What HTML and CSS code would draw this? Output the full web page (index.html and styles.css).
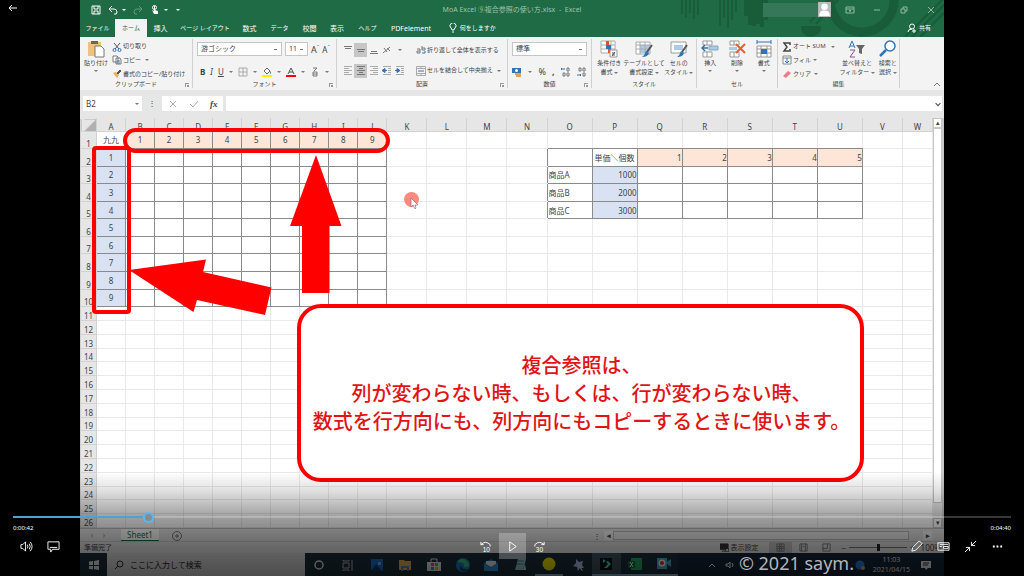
FILE: index.html
```html
<!DOCTYPE html>
<html lang="ja">
<head>
<meta charset="utf-8">
<title>MoA Excel 複合参照の使い方</title>
<link rel="stylesheet" href="styles.css">
</head>
<body>
<main class="player">
<div class="frame">
  <div class="top">
  <svg class="deco" viewBox="0 0 264 37" aria-hidden="true">
    <g stroke="#185c39" stroke-width="2" fill="none">
      <path d="M2 0v14M6 0v18M10 0v13M14 0v19M18 0v15M40 0v26M44 0v18M48 0v28M52 0v20M56 0v12"/>
      <path d="M66 0v16M70 0v25M74 0v26M78 0v24M82 0v27M86 0v20" stroke-width="4"/>
      <path d="M225 37l38-38M232 37l32-32M240 37l24-24M150 0l-20 22M158 0l-22 24M180 37l8-8"/>
      <path d="M150 0a32 32 0 0 0 64 0" stroke-width="9"/>
      <path d="M122 27a9 9 0 0 0 18 0z" fill="#185c39"/>
    </g>
  </svg>
  <header class="titlebar">
    <div class="quick">
      <button aria-label="保存"><svg viewBox="0 0 10 10"><path d="M1 1h8v8H1zM3 1v3h4V1M3 9V6h4v3" class="w"/></svg></button>
      <button aria-label="元に戻す"><svg viewBox="0 0 10 10"><path d="M4 1L1 4l3 3M1 4h5q3 0 3 3t-3 2" class="w"/></svg></button><i class="caret"></i>
      <button aria-label="やり直し" class="dim"><svg viewBox="0 0 10 10"><path d="M6 1l3 3-3 3M9 4H4Q1 4 1 7t3 2" class="w"/></svg></button>
      <button aria-label="タッチ"><svg viewBox="0 0 10 10"><path d="M4 1v5L2 5l2 4h4V6L5 5V1z" fill="#fff"/><circle cx="4.500" cy="2.500" r="2" class="w"/></svg></button><i class="caret"></i>
      <i class="caret more"></i>
    </div>
    <p class="doc">MoA Excel ⑨複合参照の使い方.xlsx&nbsp; - &nbsp;Excel</p>
    <div class="wintools">
      <span class="account"></span>
      <svg class="avatar" viewBox="0 0 12 14"><path d="M0 0h12v14H0z" fill="#bcbcbc"/><circle cx="6" cy="4.500" r="3" fill="#fff"/><path d="M1 13q0-5 5-5t5 5z" fill="#fff"/></svg>
      <button aria-label="リボン表示"><svg viewBox="0 0 10 10"><path d="M1 2h8v6H1zM1 4h8M5 7V5M4 6l1-1 1 1" class="g"/></svg></button>
      <button aria-label="最小化"><svg viewBox="0 0 10 10"><path d="M2 5h6" class="g"/></svg></button>
      <button aria-label="元のサイズ"><svg viewBox="0 0 10 10"><path d="M2 4h4v4H2zM4 4V2h4v4H6" class="g"/></svg></button>
      <button aria-label="閉じる"><svg viewBox="0 0 10 10"><path d="M2 2l6 6M8 2L2 8" class="g"/></svg></button>
    </div>
  </header>
  <nav class="tabs">
    <a href="#">ファイル</a><a href="#" class="on">ホーム</a><a href="#">挿入</a><a href="#">ページ レイアウト</a><a href="#">数式</a><a href="#">データ</a><a href="#">校閲</a><a href="#">表示</a><a href="#">ヘルプ</a><a href="#" class="latin">PDFelement</a>
    <a href="#"><svg viewBox="0 0 10 10"><path d="M4 7Q4 6 3 5a3 3 0 1 1 4 0Q6 6 6 7zM4 9h2" class="w"/></svg>&nbsp;何をしますか</a>
    <a href="#" class="share"><svg viewBox="0 0 10 10"><circle cx="5" cy="3.500" r="2.500" class="w"/><path d="M1 9q0-3 4-3M7 6v4M5 8h4" class="w"/></svg>&nbsp;共有</a>
  </nav>
  </div>

  <section class="ribbon">
    <div class="group g-clip">
      <div class="body">
        <button class="big"><svg viewBox="0 0 18 18"><path d="M1 2h13v14H1z" fill="#efc27b"/><path d="M4 1h7v3H4z" fill="#666"/><path d="M8 6h6l3 3v8H8z" fill="#fff" stroke="#777"/></svg><span>貼り付け</span><i class="caret"></i></button>
        <div class="list">
          <button><svg viewBox="0 0 10 10"><path d="M2 1l5 6M8 1L3 7" stroke="#555" fill="none"/><g fill="none" stroke="#2f74b5"><circle cx="2.500" cy="8" r="1.500"/><circle cx="7.500" cy="8" r="1.500"/></g></svg>切り取り</button>
          <button><svg viewBox="0 0 10 10"><path d="M1 1h4l1 1v5H1zM4 3h4l1 2v4H4z" fill="#fff" stroke="#777"/><path d="M5 6h3M5 8h3" stroke="#2f74b5"/></svg>コピー &nbsp;<i class="caret"></i></button>
          <button><svg viewBox="0 0 10 10"><path d="M1 4l3-1 3 3-2 3z" fill="#eeb05a"/><path d="M5 4l3-3 1 1-3 3z" fill="#555" stroke="#555"/></svg>書式のコピー/貼り付け</button>
        </div>
      </div>
      <h2>クリップボード<i class="launch"></i></h2>
    </div>
    <div class="group g-font">
      <div class="body rows">
        <div class="line"><select class="fname" aria-label="フォント"><option>游ゴシック</option></select><select class="fsize" aria-label="サイズ"><option>11</option></select><button class="aa big-a">A<sup>ˆ</sup></button><button class="aa">A<sup>ˇ</sup></button></div>
        <div class="line spread"><button class="aa"><b>B</b></button><button class="aa"><em>I</em></button><button class="aa"><u>U</u></button><i class="caret"></i><button aria-label="罫線"><svg viewBox="0 0 10 10"><path d="M1 1h8v8H1zM5 1v8M1 5h8" fill="none" stroke="#aaa"/></svg></button><i class="caret"></i><button aria-label="塗りつぶし"><svg viewBox="0 0 10 10"><path d="M2 4l3-3 3 3-3 3z" fill="#fff" stroke="#666"/><path d="M8 4q2 2 0 3z" fill="#2f74b5"/><path d="M0 8h10v2H0z" fill="#ffee00"/></svg></button><i class="caret"></i><button aria-label="文字色"><svg viewBox="0 0 10 10"><path d="M2 7l3-6 3 6M3 5h4" fill="none" stroke="#555"/><path d="M0 8h10v2H0z" fill="#f00"/></svg></button><i class="caret"></i><button aria-label="ふりがな"><svg viewBox="0 0 10 10"><path d="M3 1h4L4 4M3 5h4v4H3zM3 7h4" fill="none" stroke="#777"/></svg></button><i class="caret"></i></div>
      </div>
      <h2>フォント<i class="launch"></i></h2>
    </div>
    <div class="group g-align">
      <div class="body">
        <div class="aligns">
          <button aria-label="上揃え"><svg viewBox="0 0 10 10"><path d="M1 1.500h8M2 3.500h6" class="k"/></svg></button>
          <button aria-label="中央揃え" class="on"><svg viewBox="0 0 10 10"><path d="M1 4.500h8M2 6.500h6" class="k"/></svg></button>
          <button aria-label="下揃え"><svg viewBox="0 0 10 10"><path d="M2 6.500h6M1 8.500h8" class="k"/></svg></button>
          <button aria-label="方向"><svg viewBox="0 0 10 10"><path d="M1 8l7-6M2 3l3 4M5 3l3 3" class="k"/></svg></button>
          <i class="caret"></i>
          <button aria-label="左揃え"><svg viewBox="0 0 10 10"><path d="M1 .5h8M1 2.500h5M1 4.500h8M1 6.500h5M1 8.500h8" class="l"/></svg></button>
          <button aria-label="左右中央" class="on"><svg viewBox="0 0 10 10"><path d="M1 .5h8M3 2.500h4M1 4.500h8M3 6.500h4M1 8.500h8" class="k"/></svg></button>
          <button aria-label="右揃え"><svg viewBox="0 0 10 10"><path d="M1 .5h8M4 2.500h5M1 4.500h8M4 6.500h5M1 8.500h8" class="l"/></svg></button>
          <button aria-label="インデント減"><svg viewBox="0 0 10 10"><path d="M1 .5h8M6 2.500h3M6 4.500h3M6 6.500h3M1 8.500h8" class="l"/><path d="M0 4.500l3-2v4zM3 4.500h2" fill="#2f74b5" stroke="#2f74b5"/></svg></button>
          <button aria-label="インデント増"><svg viewBox="0 0 10 10"><path d="M1 .5h8M6 2.500h3M6 4.500h3M6 6.500h3M1 8.500h8" class="l"/><path d="M5 4.500l-3-2v4zM0 4.500h2" fill="#2f74b5" stroke="#2f74b5"/></svg></button>
        </div>
        <div class="list two">
          <button><svg viewBox="0 0 10 10"><path d="M1 4h3v4H1V6h3M6 1v4h3V3H6" class="k"/><path d="M9 6v2H6" fill="none" stroke="#2f74b5"/></svg>折り返して全体を表示する</button>
          <button><svg viewBox="0 0 10 10"><path d="M.5.5h9v9h-9zM5 .5v2M5 7.500v2M.5 2.500h9M.5 7.500h9" class="l"/><path d="M2 5h6" stroke="#2f74b5"/></svg>セルを結合して中央揃え &nbsp;<i class="caret"></i></button>
        </div>
      </div>
      <h2>配置<i class="launch"></i></h2>
    </div>
    <div class="group g-num">
      <div class="body rows">
        <div class="line"><select class="fmt" aria-label="表示形式"><option>標準</option></select></div>
        <div class="line spread"><button aria-label="通貨"><svg viewBox="0 0 10 10"><path d="M0 1h9v5H0z" fill="#2f74b5"/><circle cx="4.500" cy="3.500" r="1.500" fill="#fff"/><path d="M3 7h6M4 9h5" stroke="#e2a355" stroke-width="2"/></svg></button><i class="caret"></i><button class="aa pc">%</button><button class="aa pc"><b>,</b></button><button aria-label="小数点以下を増やす"><svg viewBox="0 0 10 10"><path d="M0 2h4M1 1L0 2l1 1" fill="none" stroke="#2f74b5"/><path d="M6 1h2v3H6zM2 6h2v3H2zM6 6h2v3H6z" class="k"/></svg></button><button aria-label="小数点以下を減らす"><svg viewBox="0 0 10 10"><path d="M0 8h4M3 7l1 1-1 1" fill="none" stroke="#2f74b5"/><path d="M2 1h2v3H2zM6 1h2v3H6zM6 6h2v3H6z" class="k"/></svg></button></div>
      </div>
      <h2>数値<i class="launch"></i></h2>
    </div>
    <div class="group g-style">
      <div class="body even">
        <button class="big"><svg viewBox="0 0 18 18"><path d="M1 1h14v12H1zM1 5h14M1 9h14M11 1v12" fill="#fff" stroke="#aaa"/><path d="M6 1h3v4H6zM8 9h3v4H8z" fill="#d9552b"/><path d="M6 5h5v4H6z" fill="#2f74b5"/><path d="M10 10h7v7h-7z" fill="#fff" stroke="#999"/><path d="M12 13h3M12 15h3M15 12l-3 4" stroke="#555" fill="none"/></svg><span>条件付き<br>書式 <i class="caret"></i></span></button>
        <button class="big"><svg viewBox="0 0 18 18"><path d="M1 2h14v12H1z" fill="#fff" stroke="#aaa"/><path d="M5 5h10v8H5z" fill="#a9cbe8"/><path d="M1 5h14M1 9h14M5 2v12M10 2v12" stroke="#aaa"/><path d="M17 5l-5 7" stroke="#555" stroke-width="2"/><path d="M11 11l3 2q-1 4-7 4 3-2 4-6z" fill="#2f74b5"/></svg><span>テーブルとして<br>書式設定 <i class="caret"></i></span></button>
        <button class="big"><svg viewBox="0 0 18 18"><path d="M1 2h15v11H1z" fill="#fff" stroke="#999"/><path d="M4 5h9v5H4z" fill="#a9cbe8"/><path d="M17 5l-5 7" stroke="#555" stroke-width="2"/><path d="M11 11l3 2q-1 4-7 4 3-2 4-6z" fill="#2f74b5"/></svg><span>セルの<br>スタイル <i class="caret"></i></span></button>
      </div>
      <h2>スタイル</h2>
    </div>
    <div class="group g-cell">
      <div class="body even">
        <button class="big"><svg viewBox="0 0 18 18"><path d="M2 1h9v4H2zM2 12h9v5H2zM6 1v4M6 12v5" fill="#fff" stroke="#999"/><path d="M8 6h9v4H8z" fill="#a9cbe8" stroke="#8ab"/><path d="M1 8h6M4 5L1 8l3 3" fill="none" stroke="#2f74b5" stroke-width="1.500"/></svg><span>挿入</span><i class="caret"></i></button>
        <button class="big"><svg viewBox="0 0 18 18"><path d="M2 1h9v4H2zM2 12h9v5H2zM6 1v4M6 12v5" fill="#fff" stroke="#999"/><path d="M1 7h8v3H1z" fill="#a9cbe8"/><path d="M8 4l9 9M17 4l-9 9" stroke="#e0622e" stroke-width="2"/></svg><span>削除</span><i class="caret"></i></button>
        <button class="big"><svg viewBox="0 0 18 18"><path d="M2 6h14v11H2zM2 9h14M2 13h14M6 6v11M12 6v11" fill="#fff" stroke="#999"/><path d="M6 9h6v5H6z" fill="#2f74b5"/><path d="M2 2h14M2 0v4M16 0v4" stroke="#2f74b5"/></svg><span>書式</span><i class="caret"></i></button>
      </div>
      <h2>セル</h2>
    </div>
    <div class="group g-edit">
      <div class="body">
        <div class="list">
          <button><svg viewBox="0 0 10 10"><path d="M8 3V1H2l3 4-3 4h6V7" fill="none" stroke="#444" stroke-width="1.500"/></svg>オート SUM &nbsp;&nbsp;<i class="caret"></i></button>
          <button><svg viewBox="0 0 10 10"><path d="M1 1h8v8H1zM1 3h8" fill="#fff" stroke="#888"/><path d="M5 3v5M3 6l2 2 2-2" fill="none" stroke="#2f74b5"/></svg>フィル&nbsp; <i class="caret"></i></button>
          <button><svg viewBox="0 0 10 10"><path d="M1 7l5-5 3 2-5 5z" fill="#e87f88"/></svg>クリア&nbsp; <i class="caret"></i></button>
        </div>
        <button class="big"><svg viewBox="0 0 18 18"><path d="M1 8l3-7 3 7M2 6h4" fill="none" stroke="#2f74b5"/><path d="M2 10h5l-5 7h5" fill="none" stroke="#8651a0"/><path d="M8 5h9l-3 4v5l-3-1V9z" fill="#666"/></svg><span>並べ替えと<br>フィルター <i class="caret"></i></span></button>
        <button class="big"><svg viewBox="0 0 18 18"><circle cx="11" cy="6" r="5" fill="#fff" stroke="#2f74b5" stroke-width="1.500"/><path d="M7 10l-6 6" stroke="#2f74b5" stroke-width="2.500"/></svg><span>検索と<br>選択 <i class="caret"></i></span></button>
      </div>
      <h2>編集</h2>
    </div>
    <button class="collapse" aria-label="リボンを折りたたむ"><svg viewBox="0 0 10 10"><path d="M2 7l3-3 3 3" class="k"/></svg></button>
  </section>

  <div class="formula">
    <label class="namebox"><input value="B2" aria-label="名前ボックス"><i class="caret"></i></label>
    <span class="dots">⋮</span>
    <div class="fx"><button aria-label="キャンセル"><svg viewBox="0 0 10 10"><path d="M2 2l6 6M8 2L2 8" stroke="#aaa"/></svg></button><button aria-label="入力"><svg viewBox="0 0 10 10"><path d="M1 5l3 3 5-6" fill="none" stroke="#aaa"/></svg></button><button class="fn">fx</button></div>
    <label class="fbar"><input aria-label="数式"><svg class="chev" viewBox="0 0 10 10"><path d="M2 4l3 3 3-3" fill="none" stroke="#555" stroke-width="1.500"/></svg></label>
  </div>

  <div class="sheet">
    <div class="cells"><table id="grid"></table></div>
    <div class="vscroll"><span>▴</span><div></div><span>▾</span></div>
  </div>

  <div class="sheetbar">
    <button class="nav">‹</button><button class="nav">›</button>
    <button class="sheettab">Sheet1</button>
    <button class="add" aria-label="新しいシート"><svg viewBox="0 0 10 10"><circle cx="5" cy="5" r="4.500" class="k"/><path d="M5 3v4M3 5h4" class="k"/></svg></button>
    <div class="hscroll"><span class="dots">⋮</span><b>◂</b><div></div><b>▸</b></div>
  </div>
  <footer class="status">
    <span>準備完了</span>
    <span class="disp"><svg viewBox="0 0 10 10"><path d="M0 1h9v6H0zM2 9h4" fill="#333" stroke="#333"/><circle cx="8" cy="8" r="2" fill="#ddd" stroke="#333"/></svg>表示設定</span>
    <button class="on" aria-label="標準"><svg viewBox="0 0 10 10"><path d="M1 1h8v8H1zM1 4h8M1 6h8M4 1v8M6 1v8" class="k"/></svg></button>
    <button aria-label="ページ レイアウト"><svg viewBox="0 0 10 10"><path d="M1 1h8v8H1zM3 1v8M7 1v8M4 4h2" class="k"/></svg></button>
    <button aria-label="改ページ"><svg viewBox="0 0 10 10"><path d="M1 1h8v8H1zM1 6h5V1" class="k"/></svg></button>
    <span class="zoom">−<input type="range" aria-label="ズーム" value="50">+</span>
    <span class="pct">100%</span>
  </footer>
  <div class="taskbar">
    <button class="start" aria-label="スタート"><svg viewBox="0 0 10 10"><path d="M0 1.500l4-.5v4H0zM5 1l5-1v5H5zM0 6h4v3.500L0 9zM5 6h5v4l-5-.8z" fill="#eee"/></svg></button>
    <label class="search"><svg viewBox="0 0 10 10"><circle cx="6" cy="4" r="3" fill="none" stroke="#333"/><path d="M4 6L1 9" stroke="#333"/></svg><input placeholder="ここに入力して検索" aria-label="検索"></label>
    <div class="apps">
      <button aria-label="Cortana"><svg viewBox="0 0 14 14"><circle cx="7" cy="7" r="4" fill="none" stroke="#eee" stroke-width="1.500"/></svg></button>
      <button aria-label="タスクビュー"><svg viewBox="0 0 14 14"><path d="M2 5h6v5H2zM2 2v1h6V2M2 13v-1h6v1M11 2v11" fill="none" stroke="#bbb"/></svg></button>
      <button aria-label="フォト"><svg viewBox="0 0 14 14"><path d="M1 1h12v12H1z" fill="#1b72cc"/><path d="M1 13l5-7 6 7z" fill="#0b3a70"/><path d="M8 4h3v3H8z" fill="#9ad"/></svg></button>
      <button aria-label="エクスプローラー"><svg viewBox="0 0 14 14"><path d="M1 2h5l1 1h6v9H1z" fill="#ecb84c"/><path d="M3 8h8v5H9v-3H5v3H3z" fill="#4a90c8"/></svg></button>
      <button aria-label="ストア"><svg viewBox="0 0 14 14"><path d="M0 4h14v9H0z" fill="#eee"/><path d="M4 4V1h6v3" fill="none" stroke="#eee"/><path d="M4 5h3v3H4z" fill="#e54"/><path d="M8 5h3v3H8z" fill="#6b3"/><path d="M4 9h3v3H4z" fill="#29d"/><path d="M8 9h3v3H8z" fill="#fb2"/></svg></button>
      <button aria-label="Edge"><svg viewBox="0 0 14 14"><circle cx="7" cy="7" r="7" fill="#1b7fc4"/><path d="M1 4q6-7 12 2 0 4-5 3 2-5-7-5z" fill="#3fc58a"/><path d="M5 7q0 5 7 4-3 3-6 2-4-2-1-6z" fill="#0c3c6e"/></svg></button>
      <button aria-label="メール"><svg viewBox="0 0 14 14"><path d="M0 5l7-4 7 4v8H0z" fill="#1c7fc6"/><path d="M2 3h10v3l-5 3-5-3z" fill="#eee"/><path d="M0 6l7 4 7-4v7H0z" fill="#2f9ae0"/></svg></button>
      <button aria-label="メモ帳"><svg viewBox="0 0 14 14"><path d="M5 1h8l-3 11H2z" fill="#9cc"/><path d="M5 3h6M4 6h6" stroke="#478"/><path d="M10 12l2-6 1 6z" fill="#ddd"/></svg></button>
      <button aria-label="ペン" class="run"><svg viewBox="0 0 14 14"><circle cx="7" cy="7" r="6.500" fill="#f4ee00"/></svg></button>
      <button aria-label="スター"><svg viewBox="0 0 14 14"><path d="M5 1l3 3 4-1-1 4 2 3-4 0-2 3-1-4-4-1 3-3z" fill="#b8c4ee"/><path d="M7 5l5 8-2-1z" fill="#fff"/></svg></button>
      <button aria-label="Filmora" class="run lit"><svg viewBox="0 0 14 14"><path d="M1 1h12v12H1z" fill="#111"/><path d="M4 2l3 2-3 2zM5 11l4-4-2-2 2-1 3 3-4 4z" fill="#4de0bf"/></svg></button>
      <button aria-label="Excel" class="run"><svg viewBox="0 0 14 14"><path d="M3 1h11v12H3z" fill="#23b06c"/><path d="M0 4h7v7H0z" fill="#0f6b3c"/><path d="M2 5l3 5M5 5l-3 5" stroke="#fff"/></svg></button>
      <button aria-label="録画" class="run"><svg viewBox="0 0 14 14"><path d="M0 1h10v11H0zM10 5l4-3v8l-4-3z" fill="#48b5dd"/><circle cx="5" cy="6" r="3.500" fill="#fff"/><circle cx="5" cy="6" r="2" fill="#d33"/></svg></button>
    </div>
    <div class="tray">
      <svg viewBox="0 0 10 10"><path d="M2 7l3-3 3 3" class="w"/></svg>
      <svg viewBox="0 0 10 10"><path d="M1 4h2l2-2v6L3 6H1zM7 3q2 2 0 4" class="w"/></svg>
      <svg class="ball" viewBox="0 0 10 10"><circle cx="5" cy="5" r="4.500" fill="#2b7de0"/><circle cx="8" cy="8" r="2" fill="#eda43a"/></svg>
      <p>11:03<br>2021/04/15</p>
      <svg class="note" viewBox="0 0 10 10"><path d="M0 1h10v7H7l-2 2-1-2H0z" fill="#eee"/><path d="M2 3h6M2 5h5" stroke="#333"/></svg>
    </div>
  </div>

  <div class="mark-row"></div>
  <div class="mark-col"></div>
  <svg class="arrows" viewBox="0 0 864 576" aria-hidden="true">
    <path d="M236 155l25.500 71h-12v67h-27.500v-67H210z" fill="#f00"/>
    <path d="M49 270l77-10.500-3 12.500 68.500 15.500-6.500 27.500-68-15-3.500 12z" fill="#f00"/>
    <circle cx="331.500" cy="199.500" r="7.500" fill="#ff8a80"/>
    <path d="M331 198v9l2-2 2 4 1-1-1-3h3z" fill="#fff" stroke="#666" stroke-width=".6"/>
  </svg>
  <p class="callout">複合参照は、<br>列が変わらない時、もしくは、行が変わらない時、<br>数式を行方向にも、列方向にもコピーするときに使います。</p>
  <div class="shade"></div>
  <p class="copyright">© 2021 saym.</p>
</div>

<button class="back" aria-label="戻る"><svg viewBox="0 0 10 10"><path d="M9 5H1M4 2L1 5l3 3" class="w"/></svg></button>
<div class="controls">
  <input class="seek" type="range" min="0" max="1000" value="132" aria-label="再生位置">
  <div class="times"><span>0:00:42</span><span>0:04:40</span></div>
  <div class="buttons">
    <div class="side">
      <button aria-label="音量"><svg viewBox="0 0 14 14"><path d="M1 5h2l3-3v10L3 9H1zM8 5q1 2 0 4M10 4q2 3 0 6M11 2q4 5 0 10" class="w"/></svg></button>
      <button aria-label="字幕"><svg viewBox="0 0 14 14"><path d="M1 2h12v8H6l-2 3v-3H1zM3 8h8" class="w"/></svg></button>
    </div>
    <div class="side mid">
      <button aria-label="10秒戻る"><svg viewBox="0 0 14 14"><path d="M2 2v3h3M2 5q5-5 10 0v2" class="w"/><text x="4" y="13">10</text></svg></button>
      <button class="play" aria-label="再生"><svg viewBox="0 0 14 14"><path d="M4 2l7 5-7 5z" class="w"/></svg></button>
      <button aria-label="30秒進む"><svg viewBox="0 0 14 14"><path d="M12 2v3H9M12 5Q7 0 2 5v2" class="w"/><text x="3" y="13">30</text></svg></button>
    </div>
    <div class="side end">
      <button aria-label="編集"><svg viewBox="0 0 14 14"><path d="M2 12l1-4 7-7 3 3-7 7z" class="w"/></svg></button>
      <button aria-label="ミニ表示"><svg viewBox="0 0 14 14"><path d="M1 3h12v8H1zM3 5h9M3 7h2M7 7h5v2H7z" class="w"/></svg></button>
      <button aria-label="全画面を終了"><svg viewBox="0 0 14 14"><path d="M13 1L8 6M8 2v4h4M1 13l5-5M2 8h4v4" class="w"/></svg></button>
      <button aria-label="その他"><svg viewBox="0 0 14 14"><path d="M2 6h2v2H2zM6 6h2v2H6zM10 6h2v2h-2z" fill="#fff"/></svg></button>
    </div>
  </div>
</div>
</main>
<script src="app.js"></script>
</body>
</html>
```

FILE: styles.css
```css
* { box-sizing: border-box; margin: 0; padding: 0; }
body { background: #000; font: 7px/9px "Noto Sans", "Noto Sans CJK JP", sans-serif; color: #444; }
button, input, select { font: inherit; color: inherit; border: 0; background: none; border-radius: 0; }
a { color: inherit; text-decoration: none; }
svg { width: 10px; height: 10px; flex: none; display: block; }
.w { fill: none; stroke: #fff; }
.g { fill: none; stroke: #8fbaa2; }
.k { fill: none; stroke: #777; }
.l { fill: none; stroke: #aaa; }
.caret { display: inline-block; border: 2px solid transparent; border-top-color: #777; border-bottom: 0; vertical-align: middle; flex: none; }

.player { position: relative; min-height: 100vh; padding: 0 80px; background: #000; overflow: hidden; }
.frame { position: relative; display: flex; flex-direction: column; height: 100vh; min-height: 520px; background: #e6e6e6; overflow: hidden; }

.top { position: relative; background: #1e6b45; }
.deco { position: absolute; right: 0; top: 0; width: 264px; height: 37px; }
.titlebar { position: relative; display: grid; grid-template-columns: 1fr auto 1fr; align-items: center; height: 19px; color: #9cc3ae; }
.titlebar .caret { border-top-color: #fff; }
.quick { display: flex; align-items: center; gap: 4px; padding-left: 8px; }
.quick button { margin-left: 3px; }
.quick .dim { opacity: .3; }
.quick .more { margin-left: 4px; }
.wintools { display: flex; align-items: center; justify-content: flex-end; gap: 17px; padding-right: 8px; }
.account { width: 56px; height: 14px; margin-right: -18px; background: #36775a; }
.avatar { width: 13px; height: 15px; margin-right: -3px; }

.tabs { position: relative; display: grid; grid-template-columns: 35px 32px 27px 62px 27px 33px 27px 28px 33px 54px 68px 1fr; height: 18px; color: #fff; font-size: 6px; }
.tabs a { display: flex; align-items: center; justify-content: center; white-space: nowrap; }
.tabs a:nth-child(3), .tabs a:nth-child(5), .tabs a:nth-child(7), .tabs a:nth-child(8), .tabs .latin { font-size: 7px; }
.tabs .on { background: #f3f3f3; color: #1e6b45; }
.tabs a.share { justify-content: flex-end; padding-right: 13px; }

.ribbon { display: flex; height: 53px; background: #f3f3f3; }
.group { display: flex; flex-direction: column; border-right: 1px solid #d0d0d0; margin: 2px 0; padding-top: 1px; }
.group h2 { position: relative; font-size: 6px; line-height: 7px; font-weight: 400; text-align: center; }
.launch { position: absolute; right: 3px; top: 2px; width: 4px; height: 4px; border: 1px solid #999; border-right: 0; border-bottom: 0; }
.launch::after { content: ""; position: absolute; right: 0; bottom: 0; border: 1px solid #999; }
.body { flex: 1; display: flex; gap: 4px; padding: 0 4px; }
.rows { flex-direction: column; justify-content: space-around; }
.even { gap: 0; padding: 0; }
.even .big { flex: 1 1 0; width: 0; }
.big { display: flex; flex-direction: column; align-items: center; gap: 1px; font-size: 6px; line-height: 9px; white-space: nowrap; }
.big svg { width: 18px; height: 18px; }
.big .caret { margin-top: 1px; }
.list { display: flex; flex-direction: column; justify-content: space-around; font-size: 6px; }
.list button { display: flex; align-items: center; gap: 1px; white-space: nowrap; }
.g-clip { width: 113px; }
.g-font { width: 144px; }
.g-align { width: 171px; }
.g-num { width: 84px; }
.g-style { width: 105px; }
.g-cell { width: 81px; }
.g-edit { width: 122px; }
.g-edit .list { flex: 1; }
.line { display: flex; align-items: center; gap: 3px; height: 14px; }
.spread { justify-content: space-between; }
.g-font .spread { padding: 0 3px; }
select { appearance: none; height: 14px; padding: 0 3px; border: 1px solid #c6c6c6; background: #fff linear-gradient(#777, #777) no-repeat right 4px center / 3px 1px; font-size: 7px; line-height: 10px; }
.fname { width: 85px; }
.fsize { width: 23px; }
.fmt { width: 100%; }
.aa { font-size: 8px; }
.aa.big-a, .aa.pc { font-size: 9px; }
.aa sup { font-size: 6px; color: #2f74b5; line-height: 1px; }
.aligns { display: grid; grid-template-columns: repeat(5, 13px); align-content: space-around; justify-items: center; align-items: center; padding-right: 6px; width: 71px; }
.aligns button { width: 13px; height: 14px; display: grid; place-items: center; }
.on { background: #c6c6c6; }
.collapse { margin: auto 2px 1px auto; }

.formula { display: flex; align-items: stretch; height: 28px; padding: 6px 2px 7px 3px; gap: 3px; background: #e6e6e6; font-size: 8px; }
.formula label, .fx { display: flex; align-items: center; background: #fff; }
.namebox { width: 59px; padding: 0 3px; }
.namebox input { flex: 1; min-width: 0; }
.formula .dots { width: 14px; text-align: center; line-height: 14px; }
.fx { width: 61px; justify-content: space-around; }
.fn { font: italic bold 9px/10px "Liberation Serif", serif; }
.fbar { flex: 1; }
.fbar input { flex: 1; }
.chev { width: 8px; height: 8px; }

.sheet { flex: 1; min-height: 0; display: flex; background: #fff; }
.cells { flex: 1; min-width: 0; }
#grid { width: 100%; height: 100%; table-layout: fixed; border-collapse: collapse; font-size: 8px; line-height: 9px; }
#grid tr { height: 11px; }
#grid tr.tall { height: 14px; }
#grid tr.head { height: 10px; }
#grid th { background: #e6e6e6; font-weight: 400; border: 1px solid #d2d2d2; vertical-align: bottom; }
#grid tr.head th { border-top-color: #e6e6e6; }
#grid td { border: 1px solid #e9e9e9; white-space: nowrap; text-align: center; }
#grid td.box { border-color: #8a8a8a; }
#grid td.before { border-right-color: #8a8a8a; }
#grid td.above { border-bottom-color: #8a8a8a; }
#grid td.peach { background: #fde6d8; }
#grid td.blue { background: #d9e2f3; }
#grid td.num { text-align: right; }
#grid td.item { text-align: left; padding-left: 1px; }
#grid .corner { background: linear-gradient(135deg, #e6e6e6 55%, #b0b0b0 55%); }
.vscroll { width: 11px; display: flex; flex-direction: column; background: #e6e6e6; border-right: 2px solid #c9c9c9; text-align: center; }
.vscroll div { flex: 1; background: #fff; border: 1px solid #c6c6c6; margin-bottom: 15px; }
.vscroll span { height: 10px; background: #fff; border: 1px solid #c6c6c6; line-height: 8px; }

.sheetbar { display: flex; align-items: stretch; height: 13px; padding: 0 12px 0 6px; border-top: 1px solid #bbb; font-size: 8px; line-height: 10px; }
.nav { width: 12px; color: #888; }
.sheettab { width: 38px; margin-left: 11px; background: #fff; color: #1e6b45; border-bottom: 1px solid #1e6b45; }
.add { margin: 1px 0 0 13px; }
.hscroll { display: flex; width: 339px; margin: 2px 0 1px auto; }
.hscroll .dots { width: 11px; }
.hscroll b { width: 9px; background: #f6f6f6; font-size: 7px; text-align: center; }
.hscroll div { flex: 1; margin-right: 14px; border: 1px solid #bbb; background: #f0f0f0; }
.status { display: flex; align-items: center; height: 12px; border-top: 1px solid #ccc; padding: 0 3px 0 4px; }
.status button { width: 23px; height: 11px; display: grid; place-items: center; }
.status svg { width: 9px; height: 9px; }
.disp { display: flex; gap: 1px; margin: 0 11px 0 auto; }
.zoom { display: flex; align-items: center; gap: 3px; margin-left: 3px; font-size: 8px; line-height: 8px; }
.zoom input { appearance: none; width: 58px; height: 8px; background: linear-gradient(#777, #777) no-repeat center / 100% 1px; }
.zoom input::-webkit-slider-thumb { appearance: none; width: 3px; height: 7px; background: #222; }
.pct { margin-left: 6px; font-size: 8px; }

.taskbar { display: flex; height: 23px; background: #1c303c; color: #eee; }
.start { width: 27px; display: grid; place-items: center; }
.search { display: flex; align-items: center; gap: 6px; width: 198px; padding-left: 7px; background: #e0e0e0; }
.search input { flex: 1; min-width: 0; font-size: 8px; }
.search input::placeholder { color: #222; opacity: 1; }
.apps { display: flex; width: 373px; }
.apps button { flex: 1; display: grid; place-items: center; }
.apps svg { width: 14px; height: 14px; }
.run { border-bottom: 2px solid #8fb4d0; }
.lit { background: #3f5563; }
.tray { flex: 1; display: flex; align-items: center; padding: 0 13px 0 29px; gap: 8px; font-size: 7px; line-height: 10px; text-align: center; background: #17263a; }
.tray .ball { margin-left: auto; }
.tray .note { margin-left: 3px; }

.mark-row { position: absolute; left: 43px; top: 128px; width: 267px; height: 25px; border: 4px solid #f00; border-radius: 13px; }
.mark-col { position: absolute; left: 12px; top: 146px; width: 39px; height: 168px; border: 4px solid #f00; border-radius: 4px; }
.arrows { position: absolute; left: 0; top: 0; width: 864px; height: 576px; }
.callout { position: absolute; left: 217px; top: 304px; width: 567px; height: 178px; display: grid; place-content: center; padding-left: 2px; border: 4px solid #f00; border-radius: 24px; background: #fff; color: #e01414; font: 500 20px/28px "Noto Sans CJK JP", sans-serif; text-align: center; white-space: nowrap; }
.shade { position: absolute; left: 0; right: 0; bottom: 0; height: 104px; background: linear-gradient(transparent, rgba(0,0,0,.12) 18%, rgba(0,0,0,.4) 46%, rgba(0,0,0,.55) 72%, rgba(0,0,0,.66)); }
.copyright { position: absolute; right: 90px; bottom: 3px; color: #b2b6bc; font-size: 18px; line-height: 20px; }

.back { position: absolute; left: 8px; top: 3px; }
.controls { position: absolute; left: 0; right: 0; bottom: 0; height: 65px; padding: 0 13px; color: #fff; }
.seek { appearance: none; display: block; width: 100%; height: 12px; background: linear-gradient(90deg, #4aa3d8 13%, rgba(255,255,255,.22) 13%) no-repeat center / 100% 2px; }
.seek::-webkit-slider-thumb { appearance: none; width: 11px; height: 11px; border: 2px solid #5cb6ee; border-radius: 50%; background: #8a8a8a; }
.times { display: flex; justify-content: space-between; font-size: 6px; line-height: 10px; }
.buttons { display: grid; grid-template-columns: 1fr auto 1fr; align-items: center; }
.side { display: flex; align-items: center; }
.side button { width: 27px; height: 26px; display: grid; place-items: center; }
.side svg { width: 13px; height: 13px; }
.side text { font: 7px "Liberation Sans", sans-serif; fill: #fff; }
.end { justify-content: flex-end; }
.side .play { background: rgba(255,255,255,.25); }
```

FILE: app.js
```js
const letters = 'ABCDEFGHIJKLMNOPQRSTUVW'.split('');
const widthOf = c => c === 'W' ? 30 : c <= 'J' ? 29 : c <= 'N' || c === 'V' ? 40 : 45;
const items = { 3: ['商品A', 1000], 4: ['商品B', 2000], 5: ['商品C', 3000] };

function cell(c, r) {
  const i = letters.indexOf(c);
  if (r === 1 && c === 'A') return ['above', '九九'];
  if (r === 1 && i <= 9) return ['box peach', i];
  if (r <= 10 && c === 'A') return ['box blue', r - 1];
  if (r <= 10 && i <= 9) return ['box', ''];
  if (r === 1 && c >= 'O' && c <= 'U') return ['above', ''];
  if (r >= 2 && r <= 5 && c === 'N') return ['before', ''];
  if (r < 2 || r > 5 || c < 'O' || c > 'U') return ['', ''];
  if (r === 2) {
    if (c === 'O') return ['box', ''];
    return c === 'P' ? ['box', '単価＼個数'] : ['box peach num', i - 15];
  }
  if (c === 'O') return ['box item', items[r][0]];
  if (c === 'P') return ['box blue num', items[r][1]];
  return ['box', ''];
}

let html = '<colgroup><col style="width:16px">' +
  letters.map(c => `<col style="width:${widthOf(c)}px">`).join('') + '</colgroup>';
html += '<tr class="head"><th class="corner"></th>' + letters.map(c => `<th>${c}</th>`).join('') + '</tr>';
for (let r = 1; r <= 26; r++) {
  html += `<tr class="${r <= 10 ? 'tall' : ''}"><th>${r}</th>` + letters.map(c => {
    const [cls, text] = cell(c, r);
    return `<td class="${cls}">${text}</td>`;
  }).join('') + '</tr>';
}
document.getElementById('grid').innerHTML = html;
```
